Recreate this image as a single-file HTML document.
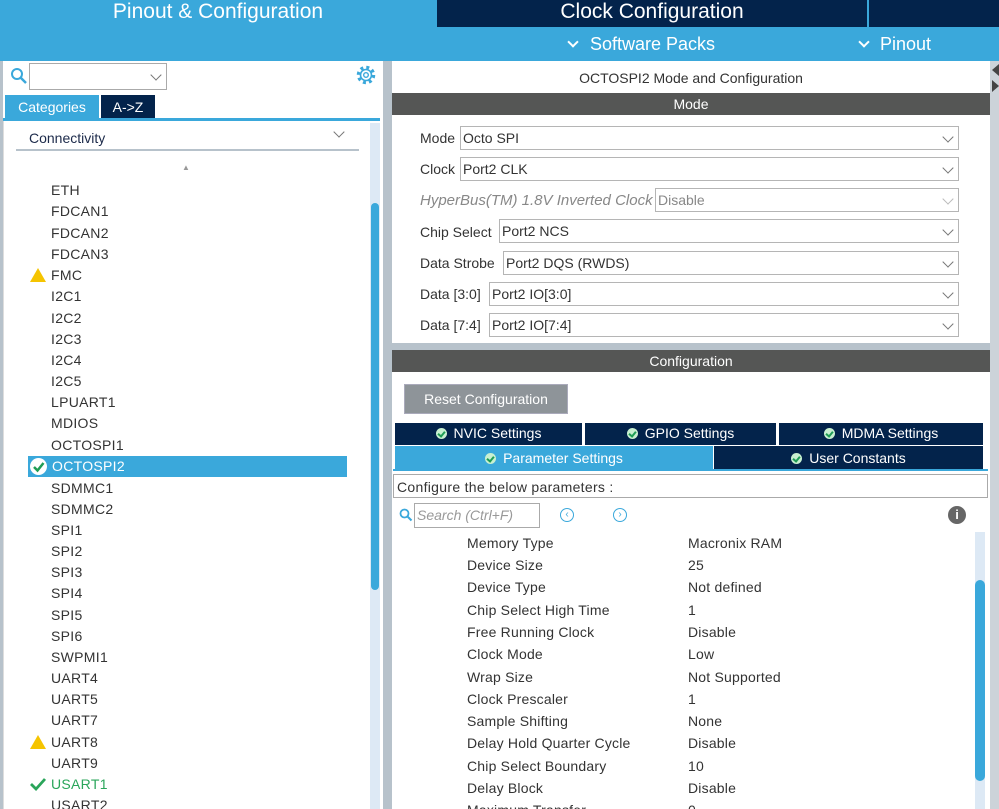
<!DOCTYPE html>
<html><head><meta charset="utf-8"><style>
*{margin:0;padding:0;box-sizing:border-box}
html,body{width:999px;height:809px;overflow:hidden}
body{background:#b7c2cb;font-family:"Liberation Sans",sans-serif;position:relative;color:#333}
.a{position:absolute}
.blue{background:#3aa8db}
.navy{background:#03234b}
.t{position:absolute;white-space:nowrap}
.sel{position:absolute;left:0;border:1px solid #b5b5b5;background:#fff;height:24px;font-size:14px;line-height:22px;padding-left:2px;color:#333}
.chev{position:absolute;right:6px;top:6px;width:8px;height:8px;border-right:1.3px solid #777;border-bottom:1.3px solid #777;transform:rotate(45deg)}
.tab{position:absolute;color:#fff;font-size:14px;text-align:center;line-height:21px}
.ok{display:inline-block;width:11px;height:11px;border-radius:50%;background:#c8f0d0;margin-right:7px;vertical-align:-1px;position:relative}
.ok:after{content:"";position:absolute;left:3px;top:2px;width:3px;height:5px;border-right:2px solid #1f9d55;border-bottom:2px solid #1f9d55;transform:rotate(40deg)}
.li{position:absolute;left:51px;font-size:14px;color:#333;letter-spacing:.3px}
.pr{position:absolute;font-size:14px;color:#333;letter-spacing:.2px}
.warn{position:absolute;left:30px;width:0;height:0;border-left:8px solid transparent;border-right:8px solid transparent;border-bottom:14px solid #f5c400}
</style></head><body>
<div class="a blue" style="left:0;top:0;width:999px;height:61px"></div>
<div class="t" style="left:0;width:436px;top:0;font-size:21px;color:#fff;text-align:center;line-height:24px">Pinout &amp; Configuration</div>
<div class="a navy" style="left:437px;top:0;width:430px;height:27px"></div>
<div class="a navy" style="left:869px;top:0;width:130px;height:27px"></div>
<div class="t" style="left:437px;width:430px;top:0;font-size:21px;color:#fff;text-align:center;line-height:24px">Clock Configuration</div>
<div class="a" style="left:569px;top:38px;width:8px;height:8px;border-right:2px solid #fff;border-bottom:2px solid #fff;transform:rotate(45deg)"></div>
<div class="t" style="left:590px;top:34px;font-size:18px;color:#fff">Software Packs</div>
<div class="a" style="left:860px;top:38px;width:8px;height:8px;border-right:2px solid #fff;border-bottom:2px solid #fff;transform:rotate(45deg)"></div>
<div class="t" style="left:880px;top:34px;font-size:18px;color:#fff">Pinout</div>

<div class="a" style="left:3px;top:61px;width:380px;height:748px;background:#fff"></div>
<div class="a" style="left:3px;top:120px;width:1px;height:689px;background:#ddd"></div>
<svg class="a" style="left:10px;top:67px" width="18" height="18"><circle cx="7" cy="7" r="5" fill="none" stroke="#3aa8db" stroke-width="2"/><line x1="11" y1="11" x2="16" y2="16" stroke="#3aa8db" stroke-width="2.5"/></svg>
<div class="a" style="left:29px;top:63px;width:138px;height:27px;border:1px solid #aaa;background:#fff"><div class="chev" style="top:7px"></div></div>
<svg class="a" style="left:356px;top:65px" width="20" height="20" viewBox="0 0 20 20"><circle cx="10" cy="10" r="7.5" fill="none" stroke="#3aa8db" stroke-width="3.5" stroke-dasharray="2.9 3"/><circle cx="10" cy="10" r="5.5" fill="none" stroke="#3aa8db" stroke-width="1.6"/><circle cx="10" cy="10" r="2.3" fill="none" stroke="#3aa8db" stroke-width="1.4"/></svg>
<div class="a blue" style="left:5px;top:95px;width:94px;height:24px"></div>
<div class="t" style="left:5px;width:94px;top:99px;font-size:14px;color:#fff;text-align:center">Categories</div>
<div class="a navy" style="left:101px;top:95px;width:54px;height:24px"></div>
<div class="t" style="left:101px;width:54px;top:99px;font-size:14px;color:#fff;text-align:center">A-&gt;Z</div>
<div class="a blue" style="left:3px;top:118px;width:377px;height:3px"></div>
<div class="t" style="left:29px;top:130px;font-size:14px;color:#1c2a4a">Connectivity</div>
<div class="a" style="left:335px;top:128px;width:8px;height:8px;border-right:1.3px solid #777;border-bottom:1.3px solid #777;transform:rotate(45deg)"></div>
<div class="a" style="left:16px;top:149px;width:343px;height:2px;background:#b7c2cb"></div>
<div class="t" style="left:182px;top:163px;font-size:8px;color:#999">▲</div>
<div class="a" style="left:370px;top:123px;width:10px;height:686px;background:#dde9f5"></div>
<div class="a blue" style="left:371px;top:203px;width:8px;height:387px;border-radius:4px"></div>

<div class="li" style="top:182px">ETH</div>
<div class="li" style="top:203px">FDCAN1</div>
<div class="li" style="top:225px">FDCAN2</div>
<div class="li" style="top:246px">FDCAN3</div>
<div class="warn" style="top:268px"></div>
<div class="li" style="top:267px">FMC</div>
<div class="li" style="top:288px">I2C1</div>
<div class="li" style="top:310px">I2C2</div>
<div class="li" style="top:331px">I2C3</div>
<div class="li" style="top:352px">I2C4</div>
<div class="li" style="top:373px">I2C5</div>
<div class="li" style="top:394px">LPUART1</div>
<div class="li" style="top:415px">MDIOS</div>
<div class="li" style="top:437px">OCTOSPI1</div>
<div class="a blue" style="left:28px;top:456px;width:319px;height:21px"></div>
<svg class="a" style="left:29px;top:457px" width="19" height="19"><circle cx="9.5" cy="9.5" r="8.5" fill="#fff"/><path d="M5 10 L8.5 13.5 L14.5 6" fill="none" stroke="#1f9d55" stroke-width="2.5"/></svg>
<div class="li" style="top:458px;color:#fff;left:52px">OCTOSPI2</div>
<div class="li" style="top:480px">SDMMC1</div>
<div class="li" style="top:501px">SDMMC2</div>
<div class="li" style="top:522px">SPI1</div>
<div class="li" style="top:543px">SPI2</div>
<div class="li" style="top:564px">SPI3</div>
<div class="li" style="top:585px">SPI4</div>
<div class="li" style="top:607px">SPI5</div>
<div class="li" style="top:628px">SPI6</div>
<div class="li" style="top:649px">SWPMI1</div>
<div class="li" style="top:670px">UART4</div>
<div class="li" style="top:691px">UART5</div>
<div class="li" style="top:712px">UART7</div>
<div class="warn" style="top:735px"></div>
<div class="li" style="top:734px">UART8</div>
<div class="li" style="top:755px">UART9</div>
<svg class="a" style="left:29px;top:777px" width="18" height="14"><path d="M2 7 L7 12 L16 2" fill="none" stroke="#2aa55a" stroke-width="2.8"/></svg>
<div class="li" style="top:776px;color:#2aa55a">USART1</div>
<div class="li" style="top:797px">USART2</div>

<div class="a" style="left:392px;top:61px;width:598px;height:282px;background:#fff"></div>
<div class="a" style="left:990px;top:61px;width:9px;height:748px;background:#ccd3d9"></div>
<div class="a" style="left:992px;top:64px;width:0;height:0;border-top:6px solid transparent;border-bottom:6px solid transparent;border-right:7px solid #444"></div>
<div class="a" style="left:992px;top:80px;width:0;height:0;border-top:6px solid transparent;border-bottom:6px solid transparent;border-left:7px solid #444"></div>
<div class="t" style="left:392px;width:598px;top:70px;text-align:center;font-size:14px;color:#333">OCTOSPI2 Mode and Configuration</div>
<div class="a" style="left:392px;top:93px;width:598px;height:22px;background:#555655"></div>
<div class="t" style="left:392px;width:598px;top:96px;text-align:center;font-size:14px;color:#fff">Mode</div>

<div class="t" style="left:420px;top:130px;font-size:14px">Mode</div>
<div class="sel" style="left:460px;top:126px;width:499px">Octo SPI<div class="chev"></div></div>
<div class="t" style="left:420px;top:161px;font-size:14px">Clock</div>
<div class="sel" style="left:460px;top:157px;width:499px">Port2 CLK<div class="chev"></div></div>
<div class="t" style="left:420px;top:192px;font-size:15px;color:#888;font-style:italic">HyperBus(TM) 1.8V Inverted Clock</div>
<div class="sel" style="left:655px;top:188px;width:304px;color:#888">Disable<div class="chev" style="border-color:#bbb"></div></div>
<div class="t" style="left:420px;top:224px;font-size:14px">Chip Select</div>
<div class="sel" style="left:499px;top:219px;width:460px">Port2 NCS<div class="chev"></div></div>
<div class="t" style="left:420px;top:255px;font-size:14px">Data Strobe</div>
<div class="sel" style="left:503px;top:251px;width:456px">Port2 DQS (RWDS)<div class="chev"></div></div>
<div class="t" style="left:420px;top:286px;font-size:14px">Data [3:0]</div>
<div class="sel" style="left:489px;top:282px;width:470px">Port2 IO[3:0]<div class="chev"></div></div>
<div class="t" style="left:420px;top:317px;font-size:14px">Data [7:4]</div>
<div class="sel" style="left:489px;top:313px;width:470px">Port2 IO[7:4]<div class="chev"></div></div>

<div class="a" style="left:392px;top:350px;width:598px;height:22px;background:#555655"></div>
<div class="t" style="left:392px;width:598px;top:353px;text-align:center;font-size:14px;color:#fff">Configuration</div>
<div class="a" style="left:392px;top:372px;width:598px;height:437px;background:#fff"></div>
<div class="a" style="left:404px;top:384px;width:164px;height:30px;background:#8e9499;border:1px solid #aab"></div>
<div class="t" style="left:404px;width:164px;top:391px;text-align:center;font-size:14px;color:#fff">Reset Configuration</div>

<div class="tab navy" style="left:395px;top:423px;width:187px;height:22px"><span class="ok"></span>NVIC Settings</div>
<div class="tab navy" style="left:585px;top:423px;width:191px;height:22px"><span class="ok"></span>GPIO Settings</div>
<div class="tab navy" style="left:779px;top:423px;width:204px;height:22px"><span class="ok"></span>MDMA Settings</div>
<div class="tab blue" style="left:395px;top:446px;width:318px;height:24px;line-height:24px"><span class="ok"></span>Parameter Settings</div>
<div class="tab navy" style="left:714px;top:446px;width:269px;height:24px;line-height:24px"><span class="ok"></span>User Constants</div>
<div class="a blue" style="left:393px;top:469px;width:595px;height:2px"></div>
<div class="a" style="left:393px;top:474px;width:595px;height:24px;border:1px solid #aaa"></div>
<div class="t" style="left:397px;top:479px;font-size:14px;color:#333;letter-spacing:.3px">Configure the below parameters :</div>
<svg class="a" style="left:399px;top:508px" width="14" height="14"><circle cx="5.5" cy="5.5" r="4" fill="none" stroke="#3aa8db" stroke-width="1.8"/><line x1="8.5" y1="8.5" x2="12.5" y2="12.5" stroke="#3aa8db" stroke-width="2"/></svg>
<div class="a" style="left:414px;top:503px;width:126px;height:25px;border:1px solid #aaa"></div>
<div class="t" style="left:417px;top:507px;font-size:14px;color:#999;font-style:italic">Search (Ctrl+F)</div>
<div class="a" style="left:560px;top:508px;width:14px;height:14px;border:1.5px solid #3aa8db;border-radius:50%;font-size:10px;color:#3aa8db;line-height:11px;text-align:center">‹</div>
<div class="a" style="left:613px;top:508px;width:14px;height:14px;border:1.5px solid #3aa8db;border-radius:50%;font-size:10px;color:#3aa8db;line-height:11px;text-align:center">›</div>
<div class="a" style="left:948px;top:506px;width:18px;height:18px;border-radius:50%;background:#666;color:#fff;font-weight:bold;font-size:13px;text-align:center;line-height:18px">i</div>
<div class="a" style="left:975px;top:532px;width:10px;height:277px;background:#dde9f5"></div>
<div class="a blue" style="left:975px;top:580px;width:10px;height:201px;border-radius:5px"></div>

<div class="pr" style="left:467px;top:535px">Memory Type</div><div class="pr" style="left:688px;top:535px">Macronix RAM</div>
<div class="pr" style="left:467px;top:557px">Device Size</div><div class="pr" style="left:688px;top:557px">25</div>
<div class="pr" style="left:467px;top:579px">Device Type</div><div class="pr" style="left:688px;top:579px">Not defined</div>
<div class="pr" style="left:467px;top:602px">Chip Select High Time</div><div class="pr" style="left:688px;top:602px">1</div>
<div class="pr" style="left:467px;top:624px">Free Running Clock</div><div class="pr" style="left:688px;top:624px">Disable</div>
<div class="pr" style="left:467px;top:646px">Clock Mode</div><div class="pr" style="left:688px;top:646px">Low</div>
<div class="pr" style="left:467px;top:669px">Wrap Size</div><div class="pr" style="left:688px;top:669px">Not Supported</div>
<div class="pr" style="left:467px;top:691px">Clock Prescaler</div><div class="pr" style="left:688px;top:691px">1</div>
<div class="pr" style="left:467px;top:713px">Sample Shifting</div><div class="pr" style="left:688px;top:713px">None</div>
<div class="pr" style="left:467px;top:735px">Delay Hold Quarter Cycle</div><div class="pr" style="left:688px;top:735px">Disable</div>
<div class="pr" style="left:467px;top:758px">Chip Select Boundary</div><div class="pr" style="left:688px;top:758px">10</div>
<div class="pr" style="left:467px;top:780px">Delay Block</div><div class="pr" style="left:688px;top:780px">Disable</div>
<div class="pr" style="left:467px;top:802px">Maximum Transfer</div><div class="pr" style="left:688px;top:802px">0</div>
</body></html>
